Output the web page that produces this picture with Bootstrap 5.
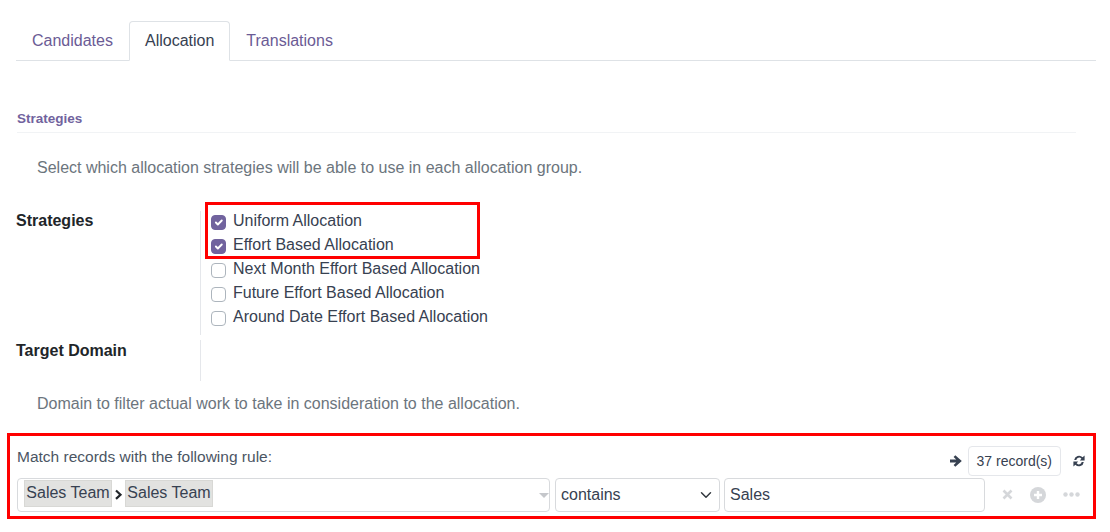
<!doctype html>
<html lang="en">
<head>
  <meta charset="utf-8">
  <meta name="viewport" content="width=device-width, initial-scale=1">
  <title>Allocation</title>
  <link href="https://cdn.jsdelivr.net/npm/bootstrap@5.3.3/dist/css/bootstrap.min.css" rel="stylesheet">
  <style>
    body { font-family: "Liberation Sans", Arial, sans-serif; font-size: 16px; color: #374151; background: #fff; height: 532px; overflow: hidden; }
    .page-wrap { padding: 21px 14px 0 16px; }
    .nav-tabs { --bs-nav-tabs-border-color: #dee2e6; height: 40px; }
    .nav-tabs .nav-link { color: #6b5b95; padding: 8px 15px; line-height: 21px; height: 40px; border-radius: 4px 4px 0 0; }
    .nav-tabs .nav-link.active { color: #374151; }
    .sec-title { margin: 50px 20px 0 1px; height: 22px; font-size: 13.5px; line-height: 16px; font-weight: 700; color: #71639e; border-bottom: 1px solid #f1f3f5; }
    .help-line { color: #6c757d; line-height: 20px; margin-left: 21px; }
    .first-help { margin-top: 25px; }
    .field-row { display: flex; }
    .strat-row { margin-top: 33px; }
    .field-name { width: 184px; font-weight: 700; color: #212529; line-height: 20px; }
    .field-val { border-left: 1px solid #e5e7eb; padding-left: 9px; position: relative; }
    .strat-val { height: 124px; padding-top: -1px; }
    .target-row { margin-top: 5px; }
    .target-row .field-name { padding-top: 1px; }
    .target-val { height: 41px; }
    .check-item { display: flex; align-items: center; height: 24px; line-height: 24px; font-size: 16px; color: #374151; }
    .check-item:first-child { margin-top: -2px; }
    .check-item .form-check-input { width: 15px; height: 15px; margin: 2px 7px 0 1px; border-color: #adb5bd; border-radius: 4px; flex: none; }
    .check-item .form-check-input:checked { background-color: #71639e; border-color: #71639e; }
    .red-mark { position: absolute; left: 205px; top: 202px; width: 275px; height: 57px; border: 3px solid #f00; pointer-events: none; }
    .rule-box { border: 3px solid #f00; margin: 19px 0 0 -9px; height: 86px; padding: 10px 7px 0 7px; }
    .rule-head { height: 31px; }
    .rule-label { color: #4b5563; font-size: 15.5px; line-height: 20px; margin-top: 1px; }
    .rec-count { border: 1px solid #e5e7eb; border-radius: 4px; font-size: 14px; line-height: 20px; padding: 4px 8px; margin: 0 11px 0 5px; color: #374151; height: 30px; }
    .rule-line { height: 34px; margin-top: 1px; }
    .path-box { width: 533px; height: 34px; border: 1px solid #d8dadd; border-radius: 4px; padding: 1px 6px; position: relative; flex: none; }
    .path-tag { background: #e2e2e0; border: 1px solid #d8d8d5; color: #374151; line-height: 24px; height: 27px; padding: 0 0; display: inline-block; width: 88px; text-align: center; }
    .path-sep { display: inline-block; width: 13px; vertical-align: middle; }
    .path-caret { position: absolute; right: 0; top: 14px; width: 0; height: 0; border-left: 5px solid transparent; border-right: 5px solid transparent; border-top: 5px solid #c5c7cb; }
    .rule-select { width: 165px; height: 34px; margin-left: 5px; flex: none; font-size: 16px; padding: 2px 5px; border-color: #d8dadd; color: #374151; border-radius: 4px; background-position: right 5px center; }
    .rule-input { width: 261px; height: 34px; margin-left: 4px; flex: none; font-size: 16px; padding: 2px 5px; border-color: #d8dadd; color: #374151; border-radius: 4px; }
    .rule-icons { gap: 17px; margin-left: 17px; margin-top: -1px; }
  </style>
</head>
<body>
  <div class="page-wrap">
    <ul class="nav nav-tabs">
      <li class="nav-item"><a class="nav-link" href="#">Candidates</a></li>
      <li class="nav-item"><a class="nav-link active" href="#">Allocation</a></li>
      <li class="nav-item"><a class="nav-link" href="#">Translations</a></li>
    </ul>

    <div class="sec-title">Strategies</div>
    <div class="help-line first-help">Select which allocation strategies will be able to use in each allocation group.</div>

    <div class="field-row strat-row">
      <div class="field-name">Strategies</div>
      <div class="field-val strat-val">
        <label class="check-item"><input class="form-check-input" type="checkbox" checked>Uniform Allocation</label>
        <label class="check-item"><input class="form-check-input" type="checkbox" checked>Effort Based Allocation</label>
        <label class="check-item"><input class="form-check-input" type="checkbox">Next Month Effort Based Allocation</label>
        <label class="check-item"><input class="form-check-input" type="checkbox">Future Effort Based Allocation</label>
        <label class="check-item"><input class="form-check-input" type="checkbox">Around Date Effort Based Allocation</label>
      </div>
    </div>
    <div class="red-mark"></div>

    <div class="field-row target-row">
      <div class="field-name">Target Domain</div>
      <div class="field-val target-val"></div>
    </div>

    <div class="help-line" style="margin-top:13px">Domain to filter actual work to take in consideration to the allocation.</div>

    <div class="rule-box">
      <div class="rule-head d-flex align-items-start">
        <div class="rule-label flex-grow-1">Match records with the following rule:</div>
        <svg width="14" height="14" viewBox="0 0 14 14" class="mt-2"><path d="M1 5.5h6.2L4.6 2.9 6.3 1.2 12.8 7l-6.5 5.8-1.7-1.7 2.6-2.6H1z" fill="#374151"/></svg>
        <div class="rec-count">37 record(s)</div>
        <svg width="14" height="14" viewBox="0 0 14 14" class="mt-2"><path d="M2.2 6A4.9 4.9 0 0 1 10.6 3.2L12.6 1.5V6.4H7.8L9.4 4.7A2.9 2.9 0 0 0 4.3 6z M11.8 8A4.9 4.9 0 0 1 3.4 10.8L1.4 12.5V7.6H6.2L4.6 9.3A2.9 2.9 0 0 0 9.7 8z" fill="#374151"/></svg>
      </div>
      <div class="rule-line d-flex">
        <div class="path-box">
          <span class="path-tag">Sales Team</span><span class="path-sep"><svg width="13" height="11" viewBox="0 0 13 11"><path d="M4 1.5 8.5 5.7 4 9.9" fill="none" stroke="#212529" stroke-width="2.2"/></svg></span><span class="path-tag">Sales Team</span>
          <span class="path-caret"></span>
        </div>
        <select class="form-select rule-select"><option>contains</option></select>
        <input class="form-control rule-input" type="text" value="Sales">
        <div class="rule-icons d-flex align-items-center">
          <svg width="11" height="11" viewBox="0 0 11 11"><path d="M1.5 1.5l8 8M9.5 1.5l-8 8" stroke="#d5d7da" stroke-width="2.6"/></svg>
          <svg width="16" height="16" viewBox="0 0 16 16"><circle cx="8" cy="8" r="8" fill="#d5d7da"/><path d="M8 4v8M4 8h8" stroke="#fff" stroke-width="2.4"/></svg>
          <svg width="17" height="5" viewBox="0 0 17 5"><circle cx="2.5" cy="2.5" r="2.2" fill="#d5d7da"/><circle cx="8.5" cy="2.5" r="2.2" fill="#d5d7da"/><circle cx="14.5" cy="2.5" r="2.2" fill="#d5d7da"/></svg>
        </div>
      </div>
    </div>
  </div>
  <script src="https://cdn.jsdelivr.net/npm/bootstrap@5.3.3/dist/js/bootstrap.bundle.min.js"></script>
</body>
</html>
